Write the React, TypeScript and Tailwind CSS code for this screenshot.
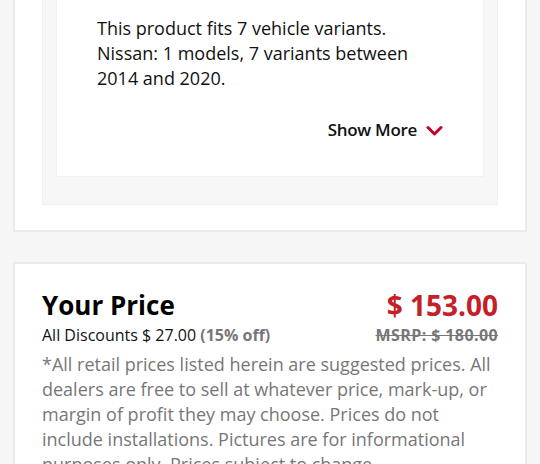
const font = { fontFamily: '"Open Sans", "Liberation Sans", sans-serif' };

export default function App() {
  return (
    <div className="h-[464px] overflow-hidden bg-[#f6f6f6] px-[13px]" style={font}>
      {/* fitment card, top cut off by the viewport */}
      <div className="-mt-[40px] border-2 border-[#ebebeb] bg-white px-[27px] pt-[20px] pb-[25px]">
        <div className="border border-[#efefef] bg-[#f7f7f7] px-[13px] pt-[13px] pb-[27px]">
          <div className="border border-[#f1f1f1] bg-white pl-[40px] pr-[40px] pt-[19px] pb-[34px]">
            <p className="text-[18px] leading-[25px] text-[#111]">
              This product fits 7 vehicle variants.
              <br />
              Nissan: 1 models, 7 variants between
              <br />
              2014 and 2020.
            </p>
            <div className="mt-[27px] flex h-[24px] items-center justify-end gap-[9px]">
              <span className="text-[17px] font-semibold tracking-[-0.3px] text-[#111]">Show More</span>
              <svg width="17" height="12" viewBox="0 0 17 12" className="mt-[1px]">
                <path d="M2 2.5 L8.5 9 L15 2.5" fill="none" stroke="#c3002f" strokeWidth="3" strokeLinecap="round" strokeLinejoin="round" />
              </svg>
            </div>
          </div>
        </div>
      </div>

      {/* price card */}
      <div className="mt-[30px] border-2 border-[#ebebeb] bg-white px-[27px] pt-[24px] pb-[24px]">
        <div className="flex items-end justify-between">
          <h2 className="text-[26px] leading-[34px] font-bold text-black">Your Price</h2>
          <span className="text-[28px] leading-[34px] font-bold text-[#c4202a]">$ 153.00</span>
        </div>
        <div className="mt-[2px] flex items-center justify-between text-[16px] leading-[22px]">
          <span className="text-[#111]">
            All Discounts $ 27.00 <span className="font-bold text-[#777]">(15% off)</span>
          </span>
          <span className="font-bold tracking-[0.4px] text-[#777] line-through">MSRP: $ 180.00</span>
        </div>
        <p className="mt-[6px] text-[18px] leading-[25px] text-[#777]">
          *All retail prices listed herein are suggested prices. All dealers are free to sell at whatever price,
          mark-up, or margin of profit they may choose. Prices do not include installations. Pictures are for
          informational purposes only. Prices subject to change.
        </p>
      </div>
    </div>
  );
}
